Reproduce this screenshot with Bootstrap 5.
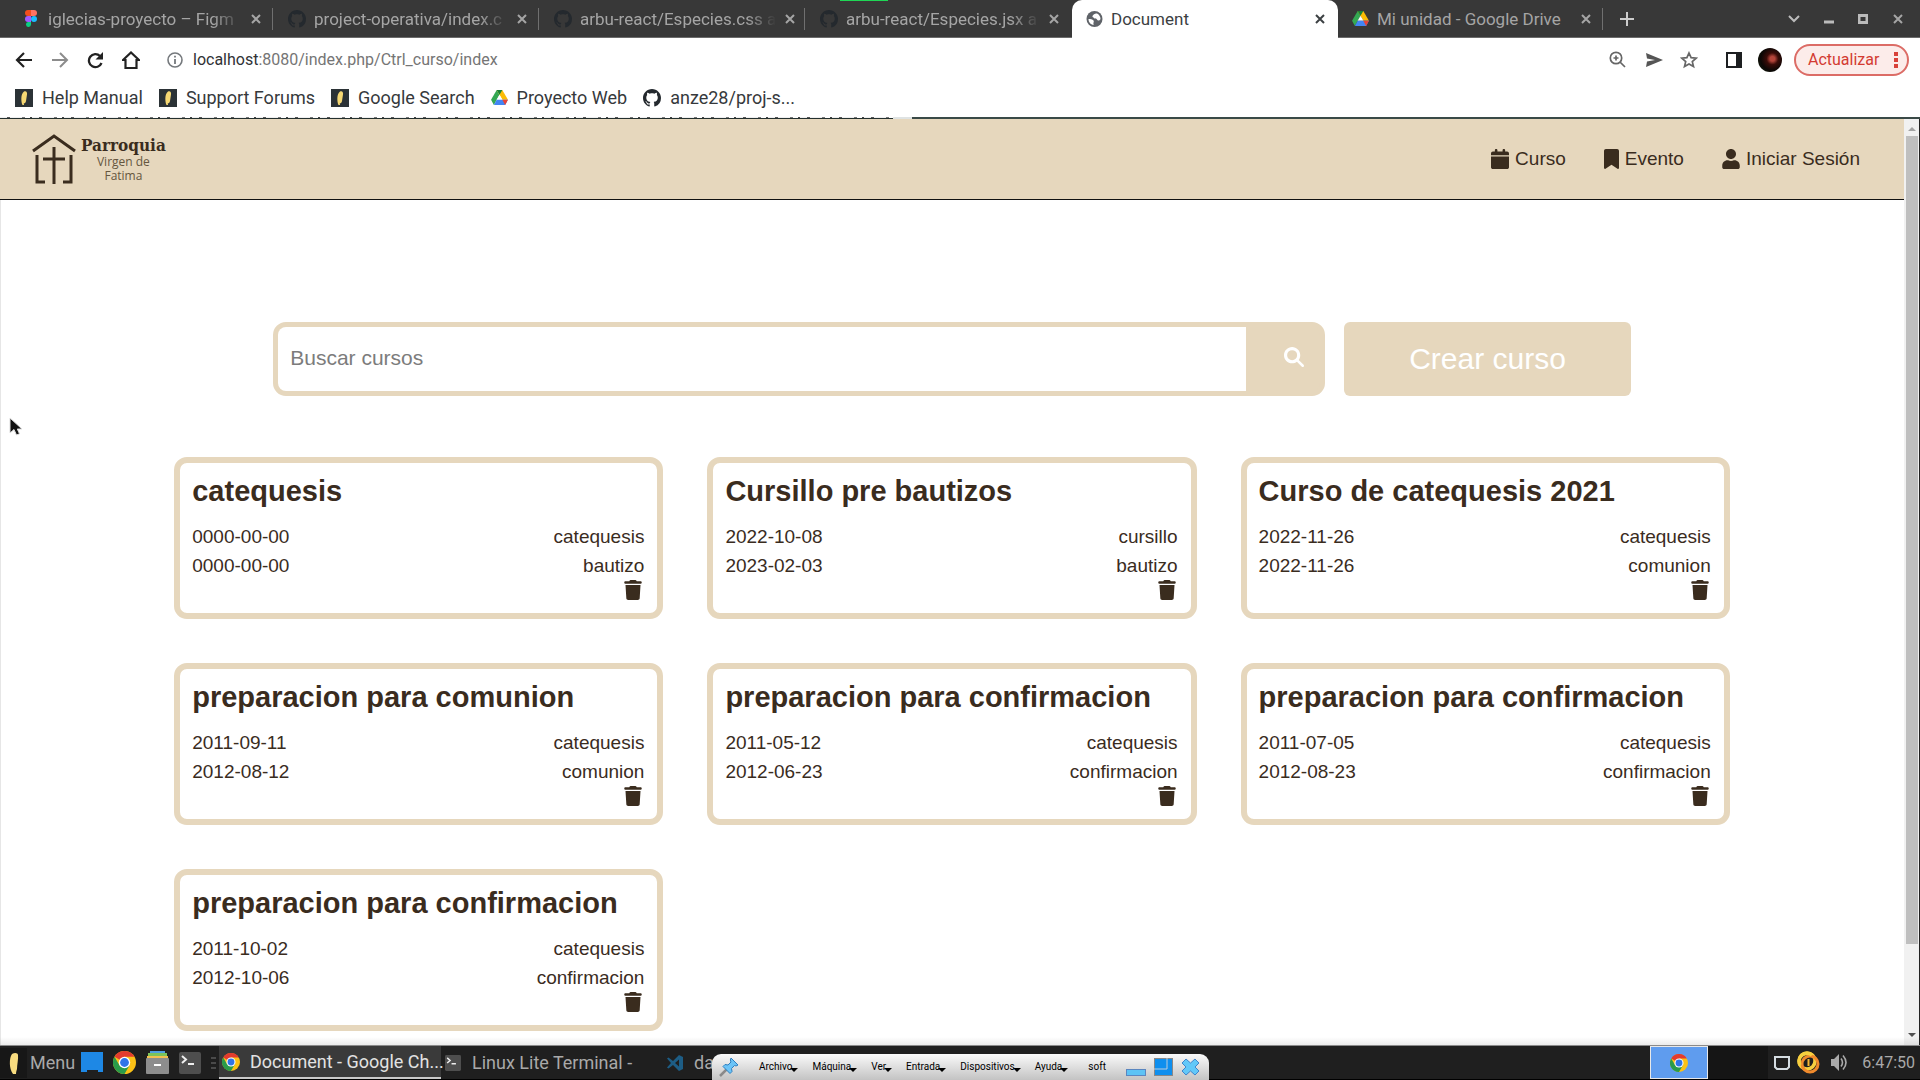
<!DOCTYPE html>
<html lang="es">
<head>
<meta charset="utf-8">
<meta name="viewport" content="width=device-width, initial-scale=1">
<title>Document</title>
<link href="https://cdn.jsdelivr.net/npm/bootstrap@5.3.0/dist/css/bootstrap.min.css" rel="stylesheet">
<style>
:root { --sand: #e6d7bd; --bark: #3a2c1e; }
body { height: 100vh; overflow: hidden; font-family: Roboto, sans-serif; background: #fff; color: #3c4043; }
a { color: inherit; text-decoration: none; }
button { background: none; border: 0; padding: 0; color: inherit; }
svg { display: block; flex: none; }

/* window tabs */
.tabstrip { height: 38px; background: #383838; border-bottom: 1px solid #6b6b6b; padding-left: 8px; font-size: 17px; line-height: 24px; color: #a5a5a5; }
.tab-item { width: 266px; height: 37px; padding: 0 11px 0 14px; border-right: 1px solid transparent; }
.tab-item.parted { background: linear-gradient(#707070, #707070) right center / 1px 22px no-repeat; }
.tab-title { flex: 1 1 0; white-space: nowrap; margin: 0 8px 0 8px; -webkit-mask-image: linear-gradient(90deg, #000 85%, transparent); mask-image: linear-gradient(90deg, #000 85%, transparent); }
.tab-item.current { background: #fff; color: #3c4043; height: 38px; border-radius: 10px 10px 0 0; }
.tab-item.current .tab-title, .tab-item.whole .tab-title { -webkit-mask-image: none; mask-image: none; }
.recording { top: 0; left: 840px; width: 48px; height: 1px; background: #1fd655; }

/* address row */
.address-row { height: 44px; padding: 0 11px 0 15px; }
.address-row .nav-icons { gap: 18px; }
.omnibox { font-size: 16px; color: #757575; }
.omnibox-host { color: #303235; }
.update-btn { height: 32px; width: 115px; border: 2px solid #dc6c66; border-radius: 16px; background: #fcecea; color: #d33b32; font-size: 16px; padding: 0 9px 0 12px; }
.avatar { width: 24px; height: 24px; border-radius: 50%; background: radial-gradient(circle at 60% 45%, #b4453a 0 12%, #3a0c08 30%, #0b0705 60%, #1c2a12); }
.bookmark-row { height: 35px; padding-left: 15px; gap: 16px; font-size: 18px; line-height: 24px; color: #36393c; }
.bookmark-row a { gap: 9px; }
.page-edge { height: 2px; background: linear-gradient(90deg, #24302e 0 893px, #dfe3e3 893px 912px, #3a4a47 912px); }
.page-edge::before { content: ""; display: block; width: 893px; height: 1px; background: repeating-linear-gradient(90deg, #eee 0 7px, #555 7px 10px, #eee 10px 22px, #777 22px 25px, #fff 25px 30px, #444 30px 32px); }

/* site */
.viewport-area { min-height: 0; font-family: "Liberation Sans", Arial, sans-serif; color: var(--bark); }
.site { overflow: hidden; background: linear-gradient(#e6e6e6, #e6e6e6) left / 1px 100% no-repeat #fff; }
.site-nav { height: 81px; background: var(--sand); border-bottom: 1px solid #111; padding: 0 44px 0 31px; font-size: 19px; line-height: 28px; }
.site-nav .menu { gap: 38px; }
.site-nav .menu a { gap: 6px; }
.brand-name { font: bold 17px/20px "DejaVu Serif Condensed", "DejaVu Serif", serif; }
.brand-sub { font: 12px/14px "Open Sans", sans-serif; color: #65563f; }
.search-row { width: 71.3%; margin: 122px auto 61px; gap: 19px; }
.search-box { border: 5px solid var(--sand); border-radius: 13px; background: var(--sand); height: 74px; }
.search-box input { border: 0; border-radius: 8px 0 0 8px; padding: 0 12px 2px; font-size: 21px; color: var(--bark); background: #fff; outline: 0; }
.search-box input::placeholder { color: #7c7c7c; }
.search-box button { width: 74px; padding: 0 0 4px 22px; color: #fff; }
.create-btn { width: 21.1%; padding-bottom: 2px; border-radius: 6px; background: var(--sand); color: #fff; font-size: 30px; }
.course-grid { width: 81.7%; margin: 0 auto; }
.course-row { --bs-gutter-x: 44px; --bs-gutter-y: 44px; }
.course-card { border: 6px solid var(--sand); border-radius: 13px; padding: 10px 13px 13px 12px; color: var(--bark); font-size: 19px; line-height: 29px; }
.course-card h2 { font-size: 29px; line-height: 36px; font-weight: 700; margin: 0 0 13px; }
.course-card button { margin-right: 2px; }
.scroll-track { width: 16px; background: #f1f1f1; border-right: 1px solid #222; padding-bottom: 8px; }
.scroll-thumb { width: 12px; height: 88%; background: #bfbfbf; margin: 5px 0 auto; }
.fade-edge { left: 0; right: 0; bottom: 0; height: 8px; background: linear-gradient(transparent, rgba(0,0,0,.08)); }
.pointer { left: 9px; top: 417px; }

/* panel */
.panel { height: 35px; background: #1f1f1f; border-top: 1px solid #8a8a8a; border-bottom: 1px solid #000; color: #a9a9a9; font-size: 18px; line-height: 24px; }
.launchers { width: 219px; gap: 10px; }
.menu-btn { gap: 3px; margin-right: -4px; }
.menu-mark { width: 27px; height: 30px; background: #171717; }
.task { width: 222px; padding-left: 3px; gap: 10px; white-space: nowrap; }
.task.active { background: #3a3a3a; color: #e2e2e2; border-bottom: 2px solid #c9c9c9; }
.pager { width: 58px; background: #5f9cee; border: 1px solid #e8e8e8; }
.pager-rest { width: 60px; background: #151515; }
.tray { gap: 7px; padding: 0 5px 0 6px; width: 152px; }
.tray time { font-size: 16px; }
.vm-bar { left: 712px; bottom: 0; width: 497px; height: 26px; border-radius: 9px 9px 0 0; background: linear-gradient(#fafafa, #c3c3c3); color: #000; font: 10px/14px Roboto, sans-serif; padding: 0 9px 0 7px; }
.vm-bar .vm-menu { gap: 14px; }
.vm-bar .vm-menu button::after { content: ""; display: inline-block; border: 4px solid transparent; border-top-color: #000; border-bottom: 0; margin-left: -2px; vertical-align: -2px; }
</style>
<script src="https://cdn.jsdelivr.net/npm/bootstrap@5.3.0/dist/js/bootstrap.bundle.min.js"></script>
</head>
<body class="d-flex flex-column position-relative">

<svg width="0" height="0" class="position-absolute" aria-hidden="true">
  <defs>
    <symbol id="i-github" viewBox="0 0 16 16"><path fill="currentColor" d="M8 0C3.58 0 0 3.58 0 8c0 3.54 2.29 6.53 5.47 7.59.4.07.55-.17.55-.38 0-.19-.01-.82-.01-1.49-2.01.37-2.53-.49-2.69-.94-.09-.23-.48-.94-.82-1.13-.28-.15-.68-.52-.01-.53.63-.01 1.08.58 1.23.82.72 1.21 1.87.87 2.33.66.07-.52.28-.87.51-1.07-1.78-.2-3.64-.89-3.64-3.95 0-.87.31-1.59.82-2.15-.08-.2-.36-1.02.08-2.12 0 0 .67-.21 2.2.82.64-.18 1.32-.27 2-.27.68 0 1.36.09 2 .27 1.53-1.04 2.2-.82 2.2-.82.44 1.1.16 1.92.08 2.12.51.56.82 1.27.82 2.15 0 3.07-1.87 3.75-3.65 3.95.29.25.54.73.54 1.48 0 1.07-.01 1.93-.01 2.2 0 .21.15.46.55.38A8.012 8.012 0 0 0 16 8c0-4.42-3.58-8-8-8z"/></symbol>
    <symbol id="i-close" viewBox="0 0 12 12"><path d="M2 2l8 8M10 2l-8 8" stroke="currentColor" stroke-width="2"/></symbol>
    <symbol id="i-drive" viewBox="0 0 18 16"><path fill="#34a853" d="M6 0L0 10.500l3 5.500L9 5z"/><path fill="#fbbc04" d="M6 0h6l6 10.500h-6z"/><path fill="#fff" d="M9 5l3.200 5.500H5.900z"/><path fill="#4285f4" d="M6 10.500h12L15 16H3z"/><path fill="#ea4335" d="M12 10.500h6L15 16z"/><path fill="#188038" d="M6 0h6L9 5z"/></symbol>
    <symbol id="i-lite" viewBox="0 0 18 18"><path fill="#2b3236" d="M0 0h18v18H0z"/><path fill="#f6d873" d="M9 2.500c2-1 3.500.5 3 3L11 12c-.3 1.500-1.200 2.500-2.200 2.300L9 16H7.500C6 13 5.500 5 9 2.500z"/></symbol>
    <symbol id="i-chrome" viewBox="0 0 24 24"><circle cx="12" cy="12" r="12" fill="#fbc116"/><path fill="#e33b2e" d="M12 12L1.600 6A12 12 0 0 1 22.400 6H12z"/><path fill="#2a9b4a" d="M1.600 6A12 12 0 0 0 12 24l5.200-9-5.200-3-5.200 3z"/><circle cx="12" cy="12" r="6" fill="#fff"/><circle cx="12" cy="12" r="4.600" fill="#2f74e8"/></symbol>
    <symbol id="i-term" viewBox="0 0 22 22"><rect width="22" height="22" rx="2" fill="#4e4e4e"/><path d="M3 4l4 3.500L3 11M9 12h6" fill="none" stroke="#eee" stroke-width="2"/></symbol>
    <symbol id="i-trash" viewBox="0 0 448 512"><path fill="currentColor" d="M135.200 17.700L128 32H32C14.300 32 0 46.300 0 64S14.300 96 32 96H416c17.700 0 32-14.300 32-32s-14.300-32-32-32H320l-7.200-14.300C307.400 6.800 296.300 0 284.200 0H163.800c-12.100 0-23.200 6.800-28.600 17.700zM416 128H32L53.200 467c1.600 25.300 22.600 45 47.900 45H346.900c25.300 0 46.300-19.700 47.900-45L416 128z"/></symbol>
  </defs>
</svg>

<header class="flex-shrink-0">
  <div class="tabstrip d-flex align-items-start">
    <div class="tab-item parted d-flex align-items-center">
      <svg width="18" height="17" viewBox="-1 0 18 17"><path fill="#f24e1e" d="M8 0H5a3 3 0 0 0 0 6h3z"/><path fill="#ff7262" d="M8 0h3a3 3 0 0 1 0 6H8z"/><path fill="#a259ff" d="M8 6H5a3 3 0 0 0 0 6h3z"/><circle cx="11" cy="9" r="3" fill="#1abcfe"/><path fill="#0acf83" d="M8 12H5a2.500 2.500 0 1 0 3 2.500z"/></svg>
      <span class="tab-title">iglecias-proyecto – Figm</span>
      <button aria-label="Cerrar"><svg width="12" height="12"><use href="#i-close"/></svg></button>
    </div>
    <div class="tab-item parted d-flex align-items-center">
      <svg width="18" height="18" color="#24292e"><use href="#i-github"/></svg>
      <span class="tab-title">project-operativa/index.c</span>
      <button aria-label="Cerrar"><svg width="12" height="12"><use href="#i-close"/></svg></button>
    </div>
    <div class="tab-item parted d-flex align-items-center">
      <svg width="18" height="18" color="#24292e"><use href="#i-github"/></svg>
      <span class="tab-title">arbu-react/Especies.css a</span>
      <button aria-label="Cerrar"><svg width="12" height="12"><use href="#i-close"/></svg></button>
    </div>
    <div class="tab-item d-flex align-items-center">
      <svg width="18" height="18" color="#24292e"><use href="#i-github"/></svg>
      <span class="tab-title">arbu-react/Especies.jsx a</span>
      <button aria-label="Cerrar"><svg width="12" height="12"><use href="#i-close"/></svg></button>
    </div>
    <div class="tab-item current d-flex align-items-center">
      <svg width="17" height="16" viewBox="0 0 16 16"><circle cx="8" cy="8" r="8" fill="#5f6368"/><path fill="#fff" d="M2 8c2 0 4 0 5 1.500S6 12 7.500 13.800C4 14 2 11 2 8zM6 5c1-2 3-3 5-2.300C13 4 14 6 14 8c-1 2-3 2-3.500.5S8 8 7.500 7 5.500 6.500 6 5z"/></svg>
      <span class="tab-title">Document</span>
      <button aria-label="Cerrar"><svg width="12" height="12"><use href="#i-close"/></svg></button>
    </div>
    <div class="tab-item parted whole d-flex align-items-center">
      <svg width="17" height="15"><use href="#i-drive"/></svg>
      <span class="tab-title">Mi unidad - Google Drive</span>
      <button aria-label="Cerrar"><svg width="12" height="12"><use href="#i-close"/></svg></button>
    </div>
    <button class="ms-3 align-self-center" aria-label="Nueva pestaña"><svg width="14" height="14" viewBox="0 0 14 14"><path d="M7 0v14M0 7h14" stroke="#ccc" stroke-width="2"/></svg></button>
    <div class="d-flex align-items-center align-self-center ms-auto gap-4 pe-3">
      <button aria-label="Buscar pestañas"><svg width="12" height="8" viewBox="0 0 12 8"><path d="M1 1l5 5 5-5" fill="none" stroke="#bbb" stroke-width="2"/></svg></button>
      <button aria-label="Minimizar"><svg width="10" height="10"><path d="M0 8h10" stroke="#bbb" stroke-width="3"/></svg></button>
      <button aria-label="Maximizar"><svg width="10" height="10"><path d="M1 1.500h8v7H1z" fill="none" stroke="#bbb" stroke-width="3"/></svg></button>
      <button aria-label="Cerrar ventana"><svg width="12" height="12"><use href="#i-close"/></svg></button>
    </div>
  </div>
  <div class="recording position-absolute"></div>

  <div class="address-row d-flex align-items-center">
    <div class="nav-icons d-flex align-items-center">
      <button aria-label="Atrás"><svg width="18" height="16" viewBox="0 0 18 16"><path d="M17 8H2M9 1L2 8l7 7" fill="none" stroke="#222" stroke-width="2.200"/></svg></button>
      <button aria-label="Adelante"><svg width="18" height="16" viewBox="0 0 18 16"><path d="M1 8h15M9 1l7 7-7 7" fill="none" stroke="#8c8c8c" stroke-width="2"/></svg></button>
      <button aria-label="Recargar"><svg width="17" height="17" viewBox="0 0 17 17"><path d="M14.500 11A6.500 6.500 0 1 1 13 4" fill="none" stroke="#222" stroke-width="2.300"/><path d="M16 0v7.500H8.500z" fill="#222"/></svg></button>
      <button aria-label="Inicio"><svg width="18" height="18" viewBox="0 0 18 18"><path d="M1 9l8-7.500L17 9h-2.500v8h-11V9z" fill="none" stroke="#222" stroke-width="2.200"/></svg></button>
    </div>
    <svg class="ms-4" width="21" height="16" viewBox="-3 0 21 16"><circle cx="8" cy="8" r="7" fill="none" stroke="#75797d" stroke-width="1.600"/><path d="M8 7v5M8 3.700v1.800" stroke="#75797d" stroke-width="1.800"/></svg>
    <a class="omnibox ms-2" href="#"><span class="omnibox-host">localhost</span>:8080/index.php/Ctrl_curso/index</a>
    <div class="d-flex align-items-center ms-auto">
      <div class="d-flex align-items-center gap-3 me-4">
        <svg width="20" height="18" viewBox="0 0 20 18"><circle cx="8" cy="7" r="5.700" fill="none" stroke="#666" stroke-width="1.700"/><path d="M12 11l5 5M8 4.500v5M5.500 7h5" stroke="#666" stroke-width="1.700"/></svg>
        <svg width="20" height="16" viewBox="0 0 20 16"><path fill="#555" d="M2 1l17 7L2 15l1-5.500L11 8 3 6.500z"/></svg>
        <svg width="18" height="18" viewBox="0 0 18 18"><path d="M9 2l2.100 4.700 5.100.5-3.900 3.400 1.200 5L9 12.900l-4.500 2.700 1.200-5L1.800 7.200l5.100-.5z" fill="none" stroke="#666" stroke-width="1.700"/></svg>
      </div>
      <svg class="ms-1 me-3" width="16" height="16"><rect width="16" height="16" fill="#1d1f21"/><rect x="2" y="2" width="8" height="12" fill="#fff"/></svg>
      <span class="avatar me-2"></span>
      <button class="update-btn d-flex align-items-center justify-content-between ms-1">Actualizar
        <svg width="4" height="16"><path d="M0 0h4v4H0zM0 6h4v4H0zM0 12h4v4H0z" fill="#d8413a"/></svg></button>
    </div>
  </div>

  <nav class="bookmark-row d-flex align-items-center pb-1" aria-label="Marcadores">
    <a class="d-flex align-items-center" href="#"><svg width="18" height="18"><use href="#i-lite"/></svg>Help Manual</a>
    <a class="d-flex align-items-center" href="#"><svg width="18" height="18"><use href="#i-lite"/></svg>Support Forums</a>
    <a class="d-flex align-items-center" href="#"><svg width="18" height="18"><use href="#i-lite"/></svg>Google Search</a>
    <a class="d-flex align-items-center" href="#"><svg width="17" height="15"><use href="#i-drive"/></svg>Proyecto Web</a>
    <a class="d-flex align-items-center" href="#"><svg width="18" height="18" color="#24292e"><use href="#i-github"/></svg>anze28/proj-s...</a>
  </nav>
  <div class="page-edge"></div>
</header>

<div class="viewport-area d-flex flex-grow-1 position-relative">
  <div class="site flex-grow-1">
    <nav class="site-nav d-flex align-items-center justify-content-between">
      <a class="d-flex align-items-center gap-1" href="#">
        <svg width="46" height="52" viewBox="0 0 46 52"><path d="M2 18L23 3l21 15M14 49H6V22M32 49h8V22M23 14v37M12 26h22" fill="none" stroke="#3a2c1e" stroke-width="3"/></svg>
        <span class="d-flex flex-column align-items-center"><span class="brand-name">Parroquia</span><span class="brand-sub">Virgen de</span><span class="brand-sub">Fatima</span></span>
      </a>
      <div class="menu d-flex align-items-center">
        <a class="d-flex align-items-center" href="#"><svg width="18" height="20" viewBox="0 0 448 512" preserveAspectRatio="none"><path fill="currentColor" d="M96 32V64H48C21.500 64 0 85.500 0 112v48H448V112c0-26.500-21.500-48-48-48H352V32c0-17.700-14.300-32-32-32s-32 14.300-32 32V64H160V32c0-17.700-14.300-32-32-32S96 14.300 96 32zM448 192H0V464c0 26.500 21.500 48 48 48H400c26.500 0 48-21.500 48-48V192z"/></svg>Curso</a>
        <a class="d-flex align-items-center" href="#"><svg width="15" height="20" viewBox="0 0 384 512"><path fill="currentColor" d="M0 48V487.700C0 501.100 10.900 512 24.300 512c5 0 9.900-1.500 14-4.400L192 400 345.700 507.600c4.100 2.900 9 4.400 14 4.400c13.400 0 24.300-10.900 24.300-24.300V48c0-26.500-21.500-48-48-48H48C21.500 0 0 21.500 0 48z"/></svg>Evento</a>
        <a class="d-flex align-items-center" href="#"><svg width="18" height="20" viewBox="0 0 448 512"><path fill="currentColor" d="M224 256c70.700 0 128-57.300 128-128S294.700 0 224 0 96 57.300 96 128s57.300 128 128 128zm89.600 32h-16.700c-22.200 10.200-46.900 16-72.900 16s-50.600-5.800-72.900-16h-16.700C60.200 288 0 348.200 0 422.400V464c0 26.500 21.500 48 48 48h352c26.500 0 48-21.500 48-48v-41.600c0-74.200-60.200-134.400-134.400-134.400z"/></svg>Iniciar Sesión</a>
      </div>
    </nav>

    <form class="search-row d-flex">
      <div class="search-box d-flex flex-grow-1">
        <input class="flex-grow-1" type="search" placeholder="Buscar cursos" aria-label="Buscar cursos">
        <button class="d-flex align-items-center justify-content-center" type="button" aria-label="Buscar"><svg width="20" height="20" viewBox="0 0 512 512"><path fill="currentColor" d="M416 208c0 45.900-14.900 88.300-40 122.700L502.600 457.400c12.500 12.500 12.500 32.800 0 45.300s-32.800 12.500-45.300 0L330.700 376c-34.400 25.200-76.800 40-122.700 40C93.100 416 0 322.900 0 208S93.100 0 208 0S416 93.100 416 208zM208 336a128 128 0 1 0 0-256 128 128 0 1 0 0 256z"/></svg></button>
      </div>
      <button class="create-btn" type="button">Crear curso</button>
    </form>

    <main class="course-grid">
      <div class="row course-row">
        <div class="col-4"><article class="card course-card"><h2>catequesis</h2>
          <div class="d-flex justify-content-between"><span>0000-00-00</span><span>catequesis</span></div>
          <div class="d-flex justify-content-between"><span>0000-00-00</span><span>bautizo</span></div>
          <button class="align-self-end" aria-label="Eliminar"><svg width="18" height="20"><use href="#i-trash"/></svg></button></article></div>
        <div class="col-4"><article class="card course-card"><h2>Cursillo pre bautizos</h2>
          <div class="d-flex justify-content-between"><span>2022-10-08</span><span>cursillo</span></div>
          <div class="d-flex justify-content-between"><span>2023-02-03</span><span>bautizo</span></div>
          <button class="align-self-end" aria-label="Eliminar"><svg width="18" height="20"><use href="#i-trash"/></svg></button></article></div>
        <div class="col-4"><article class="card course-card"><h2>Curso de catequesis 2021</h2>
          <div class="d-flex justify-content-between"><span>2022-11-26</span><span>catequesis</span></div>
          <div class="d-flex justify-content-between"><span>2022-11-26</span><span>comunion</span></div>
          <button class="align-self-end" aria-label="Eliminar"><svg width="18" height="20"><use href="#i-trash"/></svg></button></article></div>
        <div class="col-4"><article class="card course-card"><h2>preparacion para comunion</h2>
          <div class="d-flex justify-content-between"><span>2011-09-11</span><span>catequesis</span></div>
          <div class="d-flex justify-content-between"><span>2012-08-12</span><span>comunion</span></div>
          <button class="align-self-end" aria-label="Eliminar"><svg width="18" height="20"><use href="#i-trash"/></svg></button></article></div>
        <div class="col-4"><article class="card course-card"><h2>preparacion para confirmacion</h2>
          <div class="d-flex justify-content-between"><span>2011-05-12</span><span>catequesis</span></div>
          <div class="d-flex justify-content-between"><span>2012-06-23</span><span>confirmacion</span></div>
          <button class="align-self-end" aria-label="Eliminar"><svg width="18" height="20"><use href="#i-trash"/></svg></button></article></div>
        <div class="col-4"><article class="card course-card"><h2>preparacion para confirmacion</h2>
          <div class="d-flex justify-content-between"><span>2011-07-05</span><span>catequesis</span></div>
          <div class="d-flex justify-content-between"><span>2012-08-23</span><span>confirmacion</span></div>
          <button class="align-self-end" aria-label="Eliminar"><svg width="18" height="20"><use href="#i-trash"/></svg></button></article></div>
        <div class="col-4"><article class="card course-card"><h2>preparacion para confirmacion</h2>
          <div class="d-flex justify-content-between"><span>2011-10-02</span><span>catequesis</span></div>
          <div class="d-flex justify-content-between"><span>2012-10-06</span><span>confirmacion</span></div>
          <button class="align-self-end" aria-label="Eliminar"><svg width="18" height="20"><use href="#i-trash"/></svg></button></article></div>
      </div>
    </main>
  </div>
  <div class="scroll-track d-flex flex-column align-items-center flex-shrink-0">
    <svg class="mt-2" width="8" height="4"><path d="M0 4l4-4 4 4z" fill="#a3a3a3"/></svg>
    <div class="scroll-thumb"></div>
    <svg width="8" height="4"><path d="M0 0l4 4 4-4z" fill="#505050"/></svg>
  </div>
  <div class="fade-edge position-absolute"></div>
</div>

<svg class="pointer position-absolute" width="16" height="20" viewBox="0 0 16 20"><path d="M1 1v15l4-3.500L7.500 18l3-1.200L8.300 12H13z" fill="#111" stroke="#ddd"/></svg>

<footer class="panel d-flex align-items-stretch flex-shrink-0">
  <div class="launchers d-flex align-items-center">
    <button class="menu-btn d-flex align-items-center"><span class="menu-mark d-flex align-items-center justify-content-center"><svg width="12" height="22" viewBox="0 0 12 22"><path fill="#f8dc80" d="M4 2c3-2 6-1 6 1 .5 4-1 10-1 14-.5 2-1 3-1 5H5C1 17 1 6 4 2z"/></svg></span>Menu</button>
    <svg width="22" height="21"><path d="M0 0h22v20h-5v-2H6v2H0z" fill="#1e88e5"/></svg>
    <svg width="23" height="23"><use href="#i-chrome"/></svg>
    <svg width="23" height="23" viewBox="0 0 23 23"><path fill="#4f9fe0" d="M4 0h15v3H4z"/><path fill="#7cc35a" d="M2 2h19v3H2z"/><path fill="#f3c04f" d="M1 5h21v3H1z"/><rect y="7" width="23" height="16" rx="1" fill="#8d8d8d"/><path fill="#fff" d="M8 13h7v2H8z"/></svg>
    <svg width="22" height="22"><use href="#i-term"/></svg>
    <svg width="5" height="12"><path d="M0 1h5M0 6h5M0 11h5" stroke="#777"/></svg>
  </div>
  <button class="task active d-flex align-items-center"><svg width="18" height="18"><use href="#i-chrome"/></svg>Document - Google Ch...</button>
  <button class="task d-flex align-items-center"><svg width="18" height="16"><use href="#i-term"/></svg>Linux Lite Terminal -</button>
  <button class="task d-flex align-items-center"><svg width="18" height="16" viewBox="0 0 18 16"><path fill="#1d5d85" d="M13 0l4 2v12l-4 2-6-6-4.500 3.500L1 12.500 5 8 1 3.500l1.500-1L7 6zM13 4.500L9 8l4 3.500z"/></svg>da</button>
  <div class="pager ms-auto d-flex align-items-center justify-content-center"><svg width="18" height="18"><use href="#i-chrome"/></svg></div>
  <div class="pager-rest"></div>
  <div class="tray d-flex align-items-center">
    <svg width="16" height="14" viewBox="0 0 16 14"><path d="M1 1h14v10l-2 2H3l-2-2z" fill="none" stroke="#d5dde2" stroke-width="2"/></svg>
    <svg width="23" height="23" viewBox="0 0 23 23"><circle cx="10" cy="10" r="8" fill="none" stroke="#f7cf3f" stroke-width="3.500"/><circle cx="13" cy="13" r="8" fill="none" stroke="#f08a2c" stroke-width="3"/><path d="M3 14a8 8 0 0 1 12-10" fill="none" stroke="#f7cf3f" stroke-width="3.500"/><path d="M11.500 8v7" stroke="#f7b733" stroke-width="2"/></svg>
    <svg class="ms-1" width="17" height="17" viewBox="0 0 17 17"><path fill="#aaa" d="M0 5h3l5-5v17l-5-5H0z"/><path d="M10 4.500q3 4 0 8M12 1.500q6 7 0 14" fill="none" stroke="#aaa" stroke-width="1.600"/></svg>
    <time class="ms-auto">6:47:50</time>
  </div>
</footer>

<div class="vm-bar position-absolute d-flex align-items-center justify-content-between">
  <svg width="20" height="20" viewBox="0 0 20 20"><path d="M1 19l7-7" stroke="#8a8a8a" stroke-width="2.500"/><path fill="#6cc4f7" stroke="#2d7fc0" d="M12 1l7 7-2 1-1.500-.5-3 3 .5 3-2 2L4 9.500l2-2 3 .5 3-3-.7-2z"/></svg>
  <div class="vm-menu d-flex align-items-center">
    <button>Archivo</button><button>Máquina</button><button>Ver</button><button>Entrada</button><button>Dispositivos</button><button>Ayuda</button>
  </div>
  <span>soft</span>
  <div class="d-flex align-items-center gap-2">
    <svg width="20" height="18"><rect x=".5" y="11.500" width="19" height="6" fill="#5cc3f5" stroke="#5a86c0"/></svg>
    <svg width="19" height="18"><rect x=".5" y=".5" width="18" height="17" fill="#0f8fee" stroke="#888"/><path d="M0 11h13V0" fill="none" stroke="#bcd"/></svg>
    <svg width="19" height="18" viewBox="0 0 19 18"><path fill="#62c8f8" stroke="#3f85cc" d="M5 1l4.500 4L14 1l4 4-4 4 4 4-4 4-4.500-4L5 17l-4-4 4-4-4-4z"/></svg>
  </div>
</div>
</body>
</html>
